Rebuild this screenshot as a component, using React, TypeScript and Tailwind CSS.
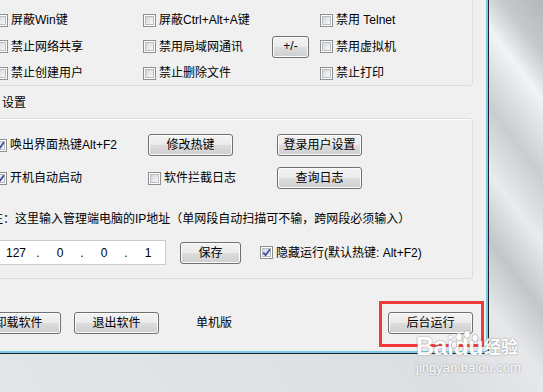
import React from 'react';

const font = "font-['Liberation_Sans','Noto_Sans_CJK_SC',sans-serif]";

const Check: React.FC<{ checked?: boolean }> = ({ checked }) => (
  <span className="relative inline-flex h-[13px] w-[13px] shrink-0 items-center justify-center border border-[#8e8f8f] bg-white">
    <span className="h-[9px] w-[9px] border border-[#b8bcc2] bg-[linear-gradient(135deg,#d4d7db,#f8f8f8)]" />
    {checked && (
      <svg className="absolute left-[1px] top-[1px] h-[9px] w-[9px]" viewBox="0 0 9 9">
        <path d="M1.2 4.6 L3.6 7.2 L8 1.2" stroke="#3a4f9c" strokeWidth={1.8} fill="none" />
      </svg>
    )}
  </span>
);

const Option: React.FC<{ label: string; checked?: boolean; className?: string }> = ({ label, checked, className }) => (
  <div className={`flex items-center gap-[3px] ${className ?? ''}`}>
    <Check checked={checked} />
    <span className="whitespace-nowrap">{label}</span>
  </div>
);

const Btn: React.FC<{ children: React.ReactNode; className?: string }> = ({ children, className }) => (
  <button
    className={`flex h-[22px] shrink-0 items-center justify-center rounded-[3px] border border-[#707070] bg-[linear-gradient(#f2f2f2_0%,#ebebeb_50%,#dddddd_50%,#cfcfcf_100%)] text-[12px] text-black shadow-[inset_0_0_0_1px_#fbfbfb] ${className ?? ''}`}
  >
    {children}
  </button>
);

const Group: React.FC<{ children: React.ReactNode; className?: string }> = ({ children, className }) => (
  <div className={`-ml-[8px] w-[481px] rounded-[3px] border border-[#d5dfe5] shadow-[inset_1px_1px_0_#ffffff] ${className ?? ''}`}>
    {children}
  </div>
);

export default function App() {
  return (
    <div
      className={`relative h-[392px] w-[543px] overflow-hidden bg-[linear-gradient(53deg,#e3e6e9_0%,#dcdfe2_55%,#e6e8ea_66%,#c2c6ca_72%,#e9ebed_78%,#c9cdd1_84%,#f1f3f4_91%,#c5c9cc_95%,#b3b7ba_100%)] text-[12px] text-black ${font}`}
    >
      {/* window */}
      <div className="absolute left-[-20px] top-[-40px] h-[394px] w-[509px] border-b border-r border-[#1e2226]">
        <div className="flex h-full flex-col border-b-2 border-r-2 border-[#79cbe9] bg-[#f0f0f0] pl-[20px]">
          {/* group 1 */}
          <Group className="mt-[30px] h-[96px] pl-[2px] pt-[16px]">
            <div className="flex h-[26px] items-center">
              <Option className="w-[148px]" label="屏蔽Win键" />
              <Option className="w-[177px]" label="屏蔽Ctrl+Alt+A键" />
              <Option label="禁用 Telnet" />
            </div>
            <div className="flex h-[27px] items-center">
              <Option className="w-[148px]" label="禁止网络共享" />
              <div className="flex w-[177px] items-center">
                <Option label="禁用局域网通讯" />
                <Btn className="ml-auto mr-[11px] h-[17px] w-[37px] pb-[1px]">+/-</Btn>
              </div>
              <Option label="禁用虚拟机" />
            </div>
            <div className="flex h-[26px] items-center">
              <Option className="w-[148px]" label="禁止创建用户" />
              <Option className="w-[177px]" label="禁止删除文件" />
              <Option label="禁止打印" />
            </div>
          </Group>

          <div className="flex h-[32px] items-center pl-[2px] pt-[1px]">设置</div>

          {/* group 2 */}
          <Group className="h-[161px] pl-[1px] pt-[15px]">
            <div className="flex h-[22px] items-center">
              <Option className="w-[154px]" label="唤出界面热键Alt+F2" checked />
              <div className="w-[129px]">
                <Btn className="w-[85px]">修改热键</Btn>
              </div>
              <Btn className="w-[85px]">登录用户设置</Btn>
            </div>
            <div className="mt-[11px] flex h-[22px] items-center">
              <Option className="w-[154px]" label="开机自动启动" checked />
              <Option className="w-[129px]" label="软件拦截日志" />
              <Btn className="w-[85px]">查询日志</Btn>
            </div>
            <div className="-ml-[3px] mt-[22px] flex h-[16px] items-center whitespace-nowrap">
              注：这里输入管理端电脑的IP地址（单网段自动扫描可不输，跨网段必须输入）
            </div>
            <div className="mt-[13px] flex h-[25px] items-center">
              <div className="-ml-[6px] flex h-[25px] w-[178px] items-center border border-[#c9cbd0] bg-white pl-[16px]">
                {['127', '.', '0', '.', '0', '.', '1'].map((s, i) => (
                  <span key={i} className="w-[22px] text-center">
                    {s}
                  </span>
                ))}
              </div>
              <Btn className="ml-[14px] w-[61px]">保存</Btn>
              <Option className="ml-[19px]" label="隐藏运行(默认热键: Alt+F2)" checked />
            </div>
          </Group>

          {/* bottom buttons */}
          <div className="mt-[33px] flex h-[22px] items-center pr-[13px]">
            <Btn className="-ml-[24px] w-[85px]">卸载软件</Btn>
            <Btn className="ml-[13px] w-[85px]">退出软件</Btn>
            <span className="ml-[37px]">单机版</span>
            <Btn className="ml-auto w-[85px]">后台运行</Btn>
          </div>
        </div>
      </div>

      {/* red annotation */}
      <div className="absolute left-[379px] top-[301px] h-[46px] w-[105px] border-[3px] border-[#f23a3a]" />

      {/* watermark */}
      <div className="pointer-events-none absolute left-[416px] top-[333px] flex flex-col text-white opacity-95 [text-shadow:0_0_2px_rgba(110,110,110,0.8)]">
        <div className="relative flex items-end">
          <span className="text-[25px] font-bold leading-[27px] tracking-[-0.5px]">Baidu</span>
          <span className="ml-[1px] text-[17px] font-bold leading-[24px]">经验</span>
          <svg className="absolute left-[34px] top-[-3px] h-[30px] w-[32px]" viewBox="0 0 32 30">
            <g fill="white" stroke="#9a9a9a" strokeWidth={0.6}>
              <ellipse cx="9" cy="7" rx="3.2" ry="4" />
              <ellipse cx="17" cy="4.5" rx="3.2" ry="4" />
              <ellipse cx="25" cy="8" rx="3" ry="3.8" />
              <ellipse cx="4" cy="15" rx="2.8" ry="3.5" />
            </g>
          </svg>
        </div>
        <span className="text-[13px] leading-[16px]">jingyan.baidu.com</span>
      </div>
    </div>
  );
}
